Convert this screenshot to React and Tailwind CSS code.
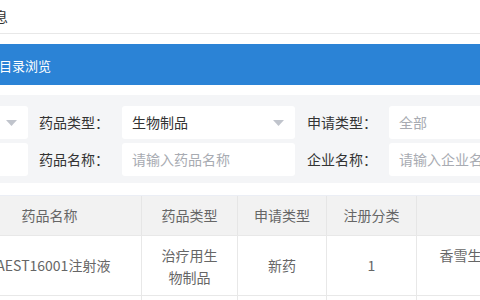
import React from 'react';

const font = { fontFamily: '"Noto Sans CJK SC", "Liberation Sans", sans-serif' };

function Arrow() {
  return (
    <svg width="11" height="6" viewBox="0 0 11 6" className="shrink-0">
      <path d="M0 0 L11 0 L5.5 6 Z" fill="#c0c4cc" />
    </svg>
  );
}

function Select({ value, placeholder, arrow = true }) {
  return (
    <div className="w-[173px] h-[33px] shrink-0 bg-white rounded-[3px] flex items-center justify-between pl-[10px] pr-[11px]">
      {value ? (
        <span className="text-[14px] text-[#333]">{value}</span>
      ) : (
        <span className="text-[14px] text-[#a8abb2] whitespace-nowrap">{placeholder}</span>
      )}
      {arrow && <Arrow />}
    </div>
  );
}

function Input({ placeholder }) {
  return (
    <div className="w-[173px] h-[33px] shrink-0 bg-white rounded-[3px] flex items-center pl-[10px] overflow-hidden">
      <span className="text-[14px] text-[#a8abb2] whitespace-nowrap">{placeholder}</span>
    </div>
  );
}

function Label({ children, first }) {
  return (
    <div className={`${first ? 'w-[94px] pl-[11px]' : 'w-[94px] pl-[12px]'} shrink-0 text-[14px] text-[#333] whitespace-nowrap`}>
      {children}
    </div>
  );
}

const cols = ['w-[184px]', 'w-[96px]', 'w-[89px]', 'w-[90px]', 'w-[200px]'];

export default function App() {
  return (
    <div className="w-[480px] h-[300px] overflow-hidden bg-white" style={font}>
      <div className="h-[34px] border-b border-[#e8e8e8] flex items-center">
        <span className="ml-[-48px] text-[14px] text-[#333] whitespace-nowrap">基本信息</span>
      </div>
      <div className="h-[10px]" />
      <div className="h-[41px] bg-[#2b83d6] flex items-center pt-[2px]">
        <span className="ml-[-27px] text-[13px] text-white whitespace-nowrap">药品目录浏览</span>
      </div>
      <div className="h-[10px]" />
      <div className="h-[88px] bg-[#f4f5f7] pt-[11px] flex flex-col gap-[4px]">
        <div className="flex items-center ml-[-145px]">
          <Select value="" placeholder="" />
          <Label first>药品类型：</Label>
          <Select value="生物制品" />
          <Label>申请类型：</Label>
          <Select placeholder="全部" />
        </div>
        <div className="flex items-center ml-[-145px]">
          <Input placeholder="" />
          <Label first>药品名称：</Label>
          <Input placeholder="请输入药品名称" />
          <Label>企业名称：</Label>
          <Input placeholder="请输入企业名称" />
        </div>
      </div>
      <div className="h-[12px]" />
      <div className="ml-[-42px] w-[659px] border-t border-[#ebeef5]">
        <div className="flex h-[40px] bg-[#f2f2f2] border-b border-[#e8e8e8]">
          {['药品名称', '药品类型', '申请类型', '注册分类', ''].map((t, i) => (
            <div key={i} className={`${cols[i]} shrink-0 border-r border-[#e6e6e6] flex items-center justify-center text-[14px] text-[#666]`}>
              {t}
            </div>
          ))}
        </div>
        <div className="flex h-[60px] border-b border-[#e8e8e8]">
          <div className={`${cols[0]} shrink-0 border-r border-[#e8e8e8] flex items-center justify-center text-[14px] text-[#666] whitespace-nowrap`}>
            TAEST16001注射液
          </div>
          <div className={`${cols[1]} shrink-0 border-r border-[#e8e8e8] flex items-center justify-center px-[16px] text-center text-[14px] leading-[22px] text-[#666]`}>
            治疗用生物制品
          </div>
          <div className={`${cols[2]} shrink-0 border-r border-[#e8e8e8] flex items-center justify-center text-[14px] text-[#666]`}>
            新药
          </div>
          <div className={`${cols[3]} shrink-0 border-r border-[#e8e8e8] flex items-center justify-center text-[14px] text-[#666]`}>
            1
          </div>
          <div className={`${cols[4]} shrink-0 border-r border-[#e8e8e8] flex items-center justify-center px-[22px] text-center text-[14px] leading-[22px] text-[#666]`}>
            香雪生物医药科技有限公司
          </div>
        </div>
        <div className="flex h-[60px]">
          {cols.map((c, i) => (
            <div key={i} className={`${c} shrink-0 border-r border-[#e8e8e8]`} />
          ))}
        </div>
      </div>
    </div>
  );
}
